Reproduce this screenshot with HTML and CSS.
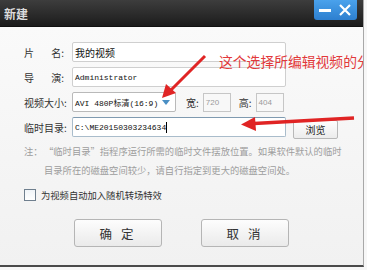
FILE: index.html
```html
<!DOCTYPE html>
<html lang="zh">
<head>
    <meta charset="UTF-8">
    <title>新建</title>
    <link rel="stylesheet" href="styles.css">
</head>
<body>
    <div class="window">
        <div class="titlebar">
            <span class="title">新建</span>
            <div class="win-buttons">
                <span class="win-btn">
                    <svg width="14" height="12" viewBox="0 0 14 12"><rect x="1" y="5" width="12" height="3" fill="#fff"/></svg>
                </span>
                <span class="win-btn">
                    <svg width="14" height="14" viewBox="0 0 14 14"><path d="M2 2 L12 12 M12 2 L2 12" stroke="#fff" stroke-width="2.2"/></svg>
                </span>
            </div>
        </div>

        <div class="content">
            <div class="row">
                <label class="label label--spread"><span>片</span><span>名:</span></label>
                <div class="field">我的视频</div>
            </div>
            <div class="row">
                <label class="label label--spread"><span>导</span><span>演:</span></label>
                <div class="field field--mono">Administrator</div>
            </div>
            <div class="row">
                <label class="label">视频大小:</label>
                <div class="select">
                    <span class="mono">AVI 480P标清(16:9)</span>
                    <span class="select-arrow"></span>
                </div>
                <label class="label-small">宽:</label>
                <div class="num">720</div>
                <label class="label-small">高:</label>
                <div class="num">404</div>
            </div>
            <div class="row">
                <label class="label">临时目录:</label>
                <div class="field field--mono field--focus">C:\ME20150303234634<span class="caret"></span></div>
                <button class="browse">浏览</button>
            </div>

            <div class="note">
                <span class="note-head">注：</span>
                <p>“临时目录”指程序运行所需的临时文件摆放位置。如果软件默认的临时目录所在的磁盘空间较少，请自行指定到更大的磁盘空间处。</p>
            </div>

            <div class="check-row">
                <span class="checkbox"></span>
                <span>为视频自动加入随机转场特效</span>
            </div>

            <div class="actions">
                <button class="btn">确 定</button>
                <button class="btn">取 消</button>
            </div>
        </div>

        <!-- red annotations on top of the screenshot -->
        <div class="tip">这个选择所编辑视频的分</div>
        <svg class="arrows" width="367" height="270" viewBox="0 0 367 270">
            <line x1="205" y1="56" x2="171" y2="90" stroke="#e02424" stroke-width="3"/>
            <polygon points="162,98 166,84 176,93" fill="#e02424"/>
            <line x1="354" y1="118" x2="254" y2="123.5" stroke="#e02424" stroke-width="3.5"/>
            <polygon points="241,124.5 255,117 256,131" fill="#e02424"/>
        </svg>
    </div>
</body>
</html>
```

FILE: styles.css
```css
body {
    margin: 0;
    width: 367px;
    height: 270px;
    background-color: #f7f7f7;
    font-family: "Noto Sans CJK SC", "Noto Sans", sans-serif;
    overflow: hidden;
}

.window {
    position: relative;
    width: 363px;
    height: 265px;
    background: linear-gradient(#fbfbfb, #f1f1f1);
    border-right: 1px solid #a8a8a8;
    border-bottom: 2px solid #4a4a4a;
    overflow: hidden;
}

.titlebar {
    display: flex;
    justify-content: space-between;
    align-items: flex-start;
    height: 26px;
    background: linear-gradient(#3d3d3d, #1c1c1c);
    border-bottom: 1px solid #111;
}

.title {
    padding: 5px 0 0 4px;
    font-size: 12px;
    font-weight: bold;
    color: #dcdcdc;
}

.win-buttons {
    display: flex;
    align-items: center;
    gap: 6px;
    height: 20px;
    margin-right: 6px;
    padding: 0 5px 0 4px;
    background: linear-gradient(#4aa2ec, #2d7fcf);
    border-radius: 0 0 3px 3px;
}

.win-btn {
    display: flex;
}

.content {
    padding: 15px 0 0 24px;
}

.row {
    display: flex;
    align-items: center;
    height: 20px;
    margin-bottom: 5px;
    font-size: 10px;
    color: #333;
}

.label {
    width: 48px;
    flex-shrink: 0;
    white-space: nowrap;
}

.label--spread {
    display: flex;
    justify-content: space-between;
    width: 40px;
    padding-right: 8px;
}

.field {
    display: flex;
    align-items: center;
    width: 208px;
    height: 18px;
    padding: 0 2px;
    background-color: #fff;
    border: 1px solid #cfcfcf;
    border-radius: 2px;
    font-size: 10px;
    color: #111;
}

.field--mono,
.mono {
    font-family: "Liberation Mono", "Noto Sans CJK SC", monospace;
    font-size: 8px;
    color: #111;
}

.field--focus {
    border-color: #a9bccb;
    border-top-color: #7f9ab0;
}

.caret {
    width: 1px;
    height: 11px;
    background-color: #000;
}

.select {
    display: flex;
    align-items: center;
    justify-content: space-between;
    width: 95px;
    height: 18px;
    padding: 0 5px 0 2px;
    background: #fff;
    border: 1px solid #b9b9b9;
    border-radius: 2px;
}

.select-arrow {
    width: 0;
    height: 0;
    border-left: 4px solid transparent;
    border-right: 4px solid transparent;
    border-top: 5px solid #4a8fc4;
}

.label-small {
    margin: 0 4px 0 10px;
}

.label-small + .num + .label-small {
    margin-left: 8px;
}

.num {
    display: flex;
    align-items: center;
    width: 24px;
    height: 17px;
    padding-left: 2px;
    border: 1px solid #c6c6c6;
    font-family: "Liberation Sans", sans-serif;
    font-size: 8px;
    color: #9a9a9a;
    background-color: #f8f8f8;
}

.browse {
    width: 45px;
    height: 19px;
    margin: 4px 0 0 7px;
    padding: 0;
    font-family: inherit;
    font-size: 10px;
    color: #222;
    background: linear-gradient(#fefefe, #ececec);
    border: 1px solid #b8b8b8;
    border-radius: 2px;
}

.note {
    display: flex;
    width: 320px;
    margin-top: 5px;
    font-size: 9.3px;
    line-height: 19px;
    color: #9d9d9d;
}

.note-head {
    flex-shrink: 0;
    width: 20px;
}

.note p {
    margin: 0;
}

.check-row {
    display: flex;
    align-items: center;
    gap: 5px;
    margin-top: 8px;
    font-size: 9.3px;
    color: #333;
}

.checkbox {
    width: 10px;
    height: 10px;
    border: 1px solid #6f7f8e;
    background: linear-gradient(#f0f4f8, #fff);
}

.actions {
    display: flex;
    gap: 39px;
    margin: 17px 0 0 50px;
}

.btn {
    width: 88px;
    height: 28px;
    padding: 0;
    font-family: inherit;
    font-size: 12.5px;
    letter-spacing: 3px;
    color: #333;
    background: linear-gradient(#fdfdfd, #eaeaea);
    border: 1px solid #b5b5b5;
    border-radius: 3px;
}

.tip {
    position: absolute;
    top: 52px;
    left: 219px;
    font-size: 13.8px;
    line-height: 18px;
    white-space: nowrap;
    color: #e2383a;
}

.arrows {
    position: absolute;
    top: 0;
    left: 0;
    pointer-events: none;
}
```
